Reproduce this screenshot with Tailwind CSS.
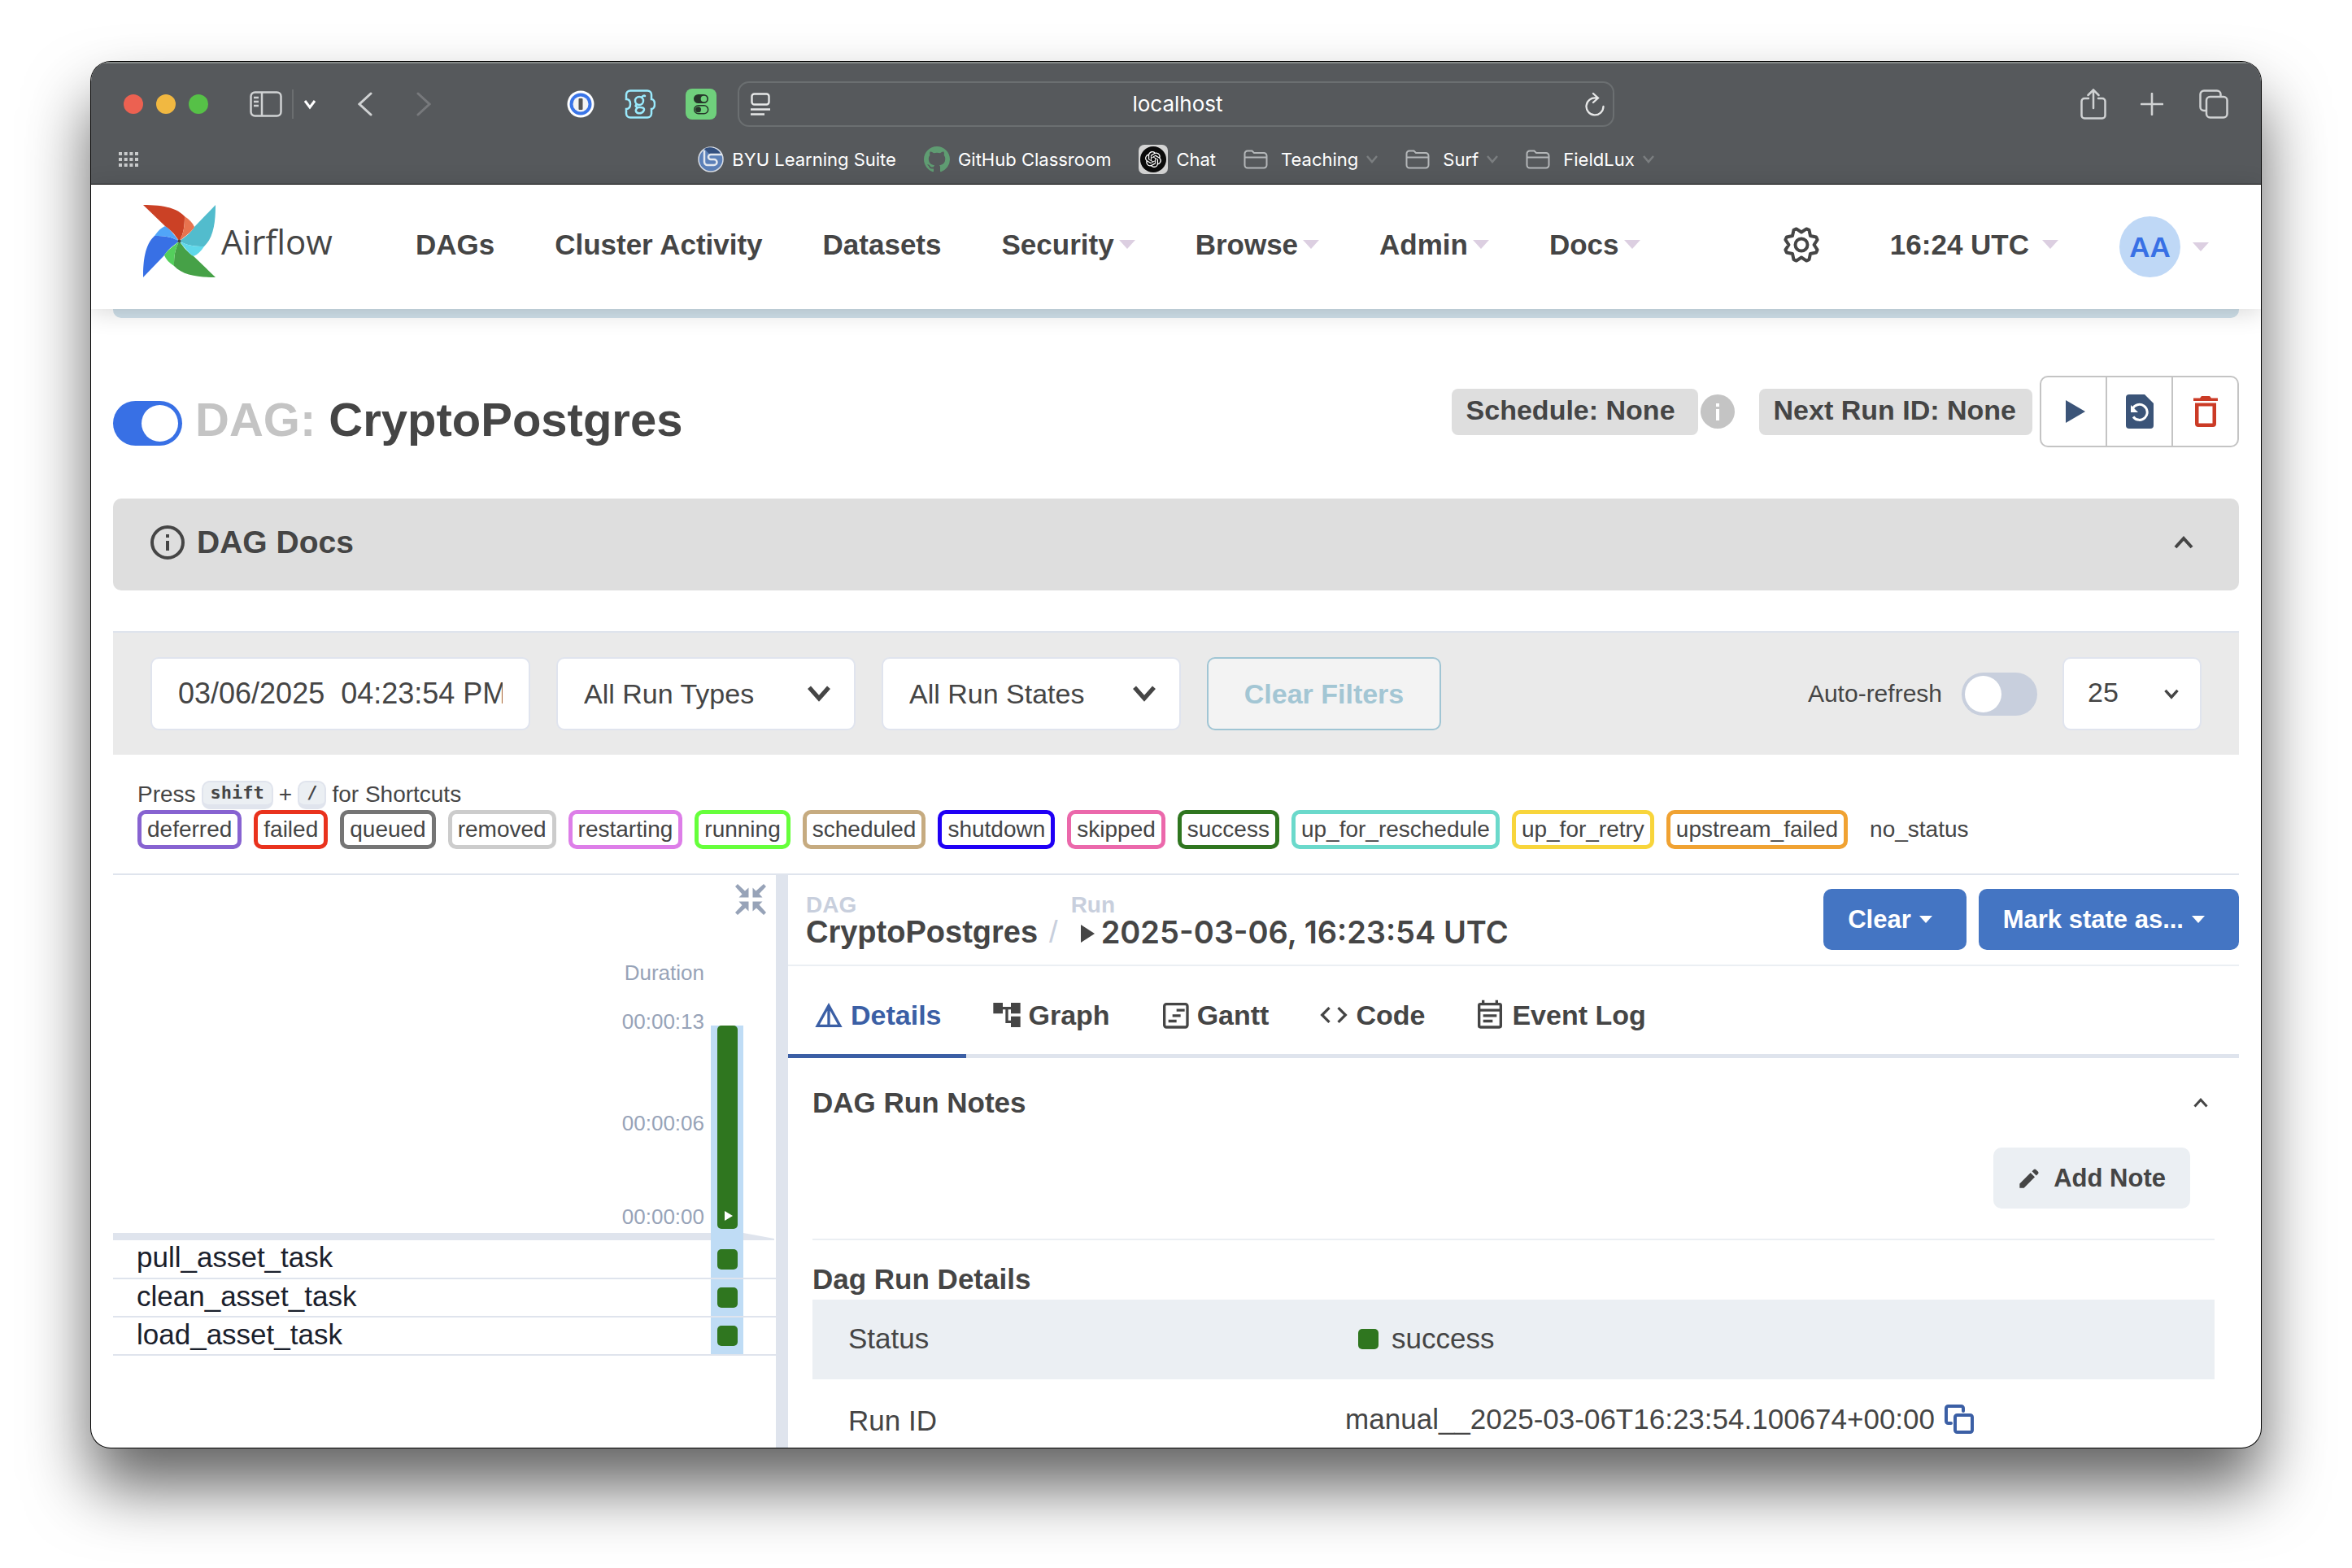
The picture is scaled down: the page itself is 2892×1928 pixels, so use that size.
<!DOCTYPE html>
<html lang="en">
<head>
<meta charset="utf-8">
<meta name="viewport" content="width=device-width, initial-scale=1">
<title>CryptoPostgres - Airflow</title>
<script src="https://cdn.jsdelivr.net/npm/@tailwindcss/browser@4"></script>
</head>
<body class="h-screen overflow-hidden bg-white px-[112px] pt-[76px] pb-[148px] font-['Liberation_Sans',Arial,sans-serif] text-[34px] leading-10 text-[#454545]">

<svg class="hidden" aria-hidden="true">
  <symbol id="caret" viewBox="0 0 20 11"><path d="M0 0h20L10 11z" fill="currentColor"/></symbol>
  <symbol id="chev" viewBox="0 0 24 24"><path d="M3 7l9 10 9-10" fill="none" stroke="currentColor" stroke-width="4"/></symbol>
  <symbol id="chev-up" viewBox="0 0 24 24"><path d="M2 18L12 7l10 11" fill="none" stroke="currentColor" stroke-width="4"/></symbol>
  <symbol id="folder" viewBox="0 0 30 24"><path d="M1.500 5v14a3.500 3.500 0 0 0 3.500 3.500h20a3.500 3.500 0 0 0 3.500-3.500V7.500a3.500 3.500 0 0 0-3.500-3.500H13l-2.500-2.500H5A3.500 3.500 0 0 0 1.500 5zM1.500 9.500h27" fill="none" stroke="#b4b7b9" stroke-width="2"/></symbol>
  <symbol id="book-chev" viewBox="0 0 14 10"><path d="M1 1l6 7 6-7" fill="none" stroke="#7b7e80" stroke-width="2.500"/></symbol>
</svg>

<div class="flex h-full flex-col overflow-hidden rounded-[24px] bg-white shadow-[0_0_0_1px_#000,0_48px_80px_rgba(0,0,0,0.62)]">

  <!-- Browser toolbar -->
  <header class="shrink-0 border-b border-black bg-[#56595c] font-[Inter,sans-serif] text-white shadow-[inset_0_2px_0_#868a89]">
    <div class="grid h-[104px] grid-cols-[1fr_minmax(0,1078px)_1fr] items-center px-10">
      <div class="flex items-center pr-[26px]">
        <div class="flex gap-4">
          <span class="size-6 rounded-full bg-[#ec6151]"></span>
          <span class="size-6 rounded-full bg-[#f1b841]"></span>
          <span class="size-6 rounded-full bg-[#56c147]"></span>
        </div>
        <button class="ml-[51px]" aria-label="Sidebar">
          <svg class="h-8 w-10" viewBox="0 0 40 32" fill="none" stroke="#d0d2d3" stroke-width="2.500"><rect x="1.500" y="1.500" width="37" height="29" rx="5"/><path d="M15 2v28M5 8h6M5 13h6M5 18h6"/></svg>
        </button>
        <span class="ml-3 h-9 w-0.5 bg-[#6b6e70]"></span>
        <button class="ml-3" aria-label="Tab groups"><svg class="h-4 w-4" viewBox="0 0 16 16"><path d="M2 4l6 8 6-8" fill="none" stroke="#fff" stroke-width="3"/></svg></button>
        <button class="ml-[51px]" aria-label="Back"><svg class="h-[30px] w-[18px]" viewBox="0 0 18 30"><path d="M16 2L2 15l14 13" fill="none" stroke="#d0d2d3" stroke-width="3" stroke-linecap="round"/></svg></button>
        <button class="ml-[54px]" aria-label="Forward"><svg class="h-[30px] w-[18px]" viewBox="0 0 18 30"><path d="M2 2l14 13L2 28" fill="none" stroke="#77797c" stroke-width="3" stroke-linecap="round"/></svg></button>
        <div class="ml-auto flex items-center gap-[37px]">
          <svg class="size-[34px]" viewBox="0 0 34 34"><circle cx="17" cy="17" r="16.500" fill="#fff"/><circle cx="17" cy="17" r="13.500" fill="#3a75e8"/><circle cx="17" cy="17" r="9.500" fill="#f4f4f4"/><rect x="14.500" y="10" width="5" height="14" rx="1" fill="#555"/></svg>
          <svg class="h-9 w-[38px]" viewBox="0 0 38 36" fill="none" stroke="#9aeafd" stroke-width="2.500"><path d="M7 1.500h21a5 5 0 0 1 5 5V12c2 0 4 2 4 6s-2 6-4 6v5.500a5 5 0 0 1-5 5H7a5 5 0 0 1-5-5V24c4 0 5-3 5-6s-1-6-5-6V6.500a5 5 0 0 1 5-5z"/><circle cx="18" cy="14" r="5"/><path d="M21 10c1-2 3-3 4-2M15 18c-3 3-1 4 4 4s6 2 4 5-8 3-9 0 1-4 3-5" stroke-linecap="round"/></svg>
          <svg class="size-[38px]" viewBox="0 0 38 38"><rect width="38" height="38" rx="8" fill="#6fd07c"/><rect x="10" y="7" width="18" height="11" rx="5.500" fill="#26352a"/><circle cx="22.500" cy="12.500" r="3.800" fill="#6fd07c"/><rect x="10.700" y="20.700" width="17" height="10" rx="5" fill="none" stroke="#26352a" stroke-width="1.500"/><circle cx="15.500" cy="25.700" r="3.500" fill="#26352a"/></svg>
        </div>
      </div>
      <div class="flex h-14 items-center rounded-[14px] border-2 border-[#6b6f71] pr-2.5 pl-3.5">
        <svg class="h-[28px] w-6" viewBox="0 0 24 28" fill="none" stroke="#e6e7e7" stroke-width="2.400"><rect x="1.500" y="1.500" width="21" height="13" rx="3"/><path d="M0 20.500h24M0 26.500h17"/></svg>
        <input aria-label="Address" class="min-w-0 flex-1 bg-transparent text-center text-[26px] outline-none" value="localhost">
        <svg class="h-[30px] w-6" viewBox="0 0 24 30" fill="none" stroke="#e6e7e7" stroke-width="2.300" stroke-linecap="round"><path d="M13.500 7.500A10.500 10.500 0 1 0 22.500 18M10 2l6 5.500-6 5.500"/></svg>
      </div>
      <div class="flex items-center justify-end">
        <button aria-label="Share"><svg class="h-[38px] w-8" viewBox="0 0 32 38" fill="none" stroke="#d0d2d3" stroke-width="2.500" stroke-linecap="round"><path d="M10 12H5a3.500 3.500 0 0 0-3.500 3.500V33A3.500 3.500 0 0 0 5 36.500h22a3.500 3.500 0 0 0 3.500-3.500V15.500A3.500 3.500 0 0 0 27 12h-5M16 24V2M9.500 8L16 1.500 22.500 8"/></svg></button>
        <button class="ml-[42px]" aria-label="New tab"><svg class="size-7" viewBox="0 0 28 28" stroke="#d0d2d3" stroke-width="2.600" stroke-linecap="round"><path d="M14 1v26M1 14h26"/></svg></button>
        <button class="ml-11" aria-label="Tab overview"><svg class="size-9" viewBox="0 0 36 36" fill="none" stroke="#d0d2d3" stroke-width="2.500"><path d="M9 26H6a4.500 4.500 0 0 1-4.500-4.500V6A4.500 4.500 0 0 1 6 1.500h16A4.500 4.500 0 0 1 26.500 6v3"/><rect x="9" y="9" width="25.500" height="25.500" rx="4.500"/></svg></button>
      </div>
    </div>
    <nav class="grid grid-cols-[1fr_auto_1fr] items-center px-[34px] pb-3.5 text-[22px] leading-8" aria-label="Bookmarks">
      <svg class="h-[18px] w-6" viewBox="0 0 24 18" fill="#c9cbcc"><path d="M0 0h4v4H0zM6.700 0h4v4h-4zM13.400 0h4v4h-4zM20 0h4v4h-4zM0 7h4v4H0zM6.700 7h4v4h-4zM13.400 7h4v4h-4zM20 7h4v4h-4zM0 14h4v4H0zM6.700 14h4v4h-4zM13.400 14h4v4h-4zM20 14h4v4h-4z"/></svg>
      <div class="flex h-8 items-center gap-[34px]">
        <a href="#" class="flex items-center gap-2.5"><svg class="size-8" viewBox="0 0 32 32"><circle cx="16" cy="16" r="15" fill="#5b80b8" stroke="#d9dee6" stroke-width="1.500"/><path d="M8 3a15 15 0 0 1 21 8H16z" fill="#33507f"/><path d="M8 5v14a4 4 0 0 0 4 4h8a3.500 3.500 0 0 0 0-7h-4a3 3 0 0 1 0-6h14" fill="none" stroke="#e3e8ef" stroke-width="2.500"/></svg>BYU Learning Suite</a>
        <a href="#" class="flex items-center gap-2.5"><svg class="size-8" viewBox="0 0 16 16" fill="#5f9c72"><path d="M8 0C3.580 0 0 3.580 0 8c0 3.540 2.290 6.530 5.470 7.590.4.070.55-.17.55-.38 0-.19-.01-.82-.01-1.490-2.010.37-2.530-.49-2.690-.94-.09-.23-.48-.94-.82-1.130-.28-.15-.68-.52-.01-.53.63-.01 1.080.58 1.230.82.72 1.210 1.870.87 2.330.66.07-.52.28-.87.51-1.070-1.780-.2-3.640-.89-3.640-3.950 0-.87.31-1.590.82-2.150-.08-.2-.36-1.020.08-2.120 0 0 .67-.21 2.200.82.64-.18 1.320-.27 2-.27s1.360.09 2 .27c1.530-1.040 2.200-.82 2.200-.82.44 1.100.16 1.920.08 2.120.51.56.82 1.270.82 2.150 0 3.070-1.870 3.750-3.650 3.950.29.25.54.73.54 1.480 0 1.070-.01 1.930-.01 2.200 0 .21.15.46.55.38A8.010 8.010 0 0 0 16 8c0-4.420-3.580-8-8-8z"/></svg>GitHub Classroom</a>
        <a href="#" class="flex items-center gap-2.5"><svg class="size-9" viewBox="0 0 36 36"><rect width="36" height="36" rx="7" fill="#d4d4d4"/><circle cx="18" cy="18" r="16" fill="#0b0b0b"/><g transform="translate(8 8) scale(.83)" fill="#fff"><path d="M22.282 9.821a5.985 5.985 0 0 0-.516-4.911 6.046 6.046 0 0 0-6.510-2.900A6.065 6.065 0 0 0 4.981 4.182a5.985 5.985 0 0 0-3.998 2.900 6.046 6.046 0 0 0 .743 7.097 5.980 5.980 0 0 0 .511 4.911 6.051 6.051 0 0 0 6.515 2.900A5.985 5.985 0 0 0 13.260 24a6.056 6.056 0 0 0 5.772-4.206 5.989 5.989 0 0 0 3.998-2.900 6.056 6.056 0 0 0-.748-7.073zm-9.022 12.608a4.476 4.476 0 0 1-2.876-1.041l.142-.080 4.778-2.758a.795.795 0 0 0 .393-.681v-6.737l2.020 1.169a.071.071 0 0 1 .038.052v5.583a4.504 4.504 0 0 1-4.495 4.494zm-9.661-4.125a4.471 4.471 0 0 1-.535-3.014l.142.085 4.783 2.758a.771.771 0 0 0 .781 0l5.843-3.369v2.332a.080.080 0 0 1-.033.062L9.740 19.950a4.499 4.499 0 0 1-6.141-1.646zM2.341 7.896a4.485 4.485 0 0 1 2.366-1.973V11.600a.766.766 0 0 0 .388.677l5.814 3.354-2.020 1.169a.076.076 0 0 1-.071 0l-4.830-2.787A4.504 4.504 0 0 1 2.341 7.872zm16.596 3.856L13.104 8.364 15.119 7.200a.076.076 0 0 1 .071 0l4.830 2.791a4.494 4.494 0 0 1-.677 8.104v-5.677a.790.790 0 0 0-.407-.667zm2.011-3.023l-.142-.085-4.774-2.782a.776.776 0 0 0-.785 0L9.409 9.230V6.897a.066.066 0 0 1 .028-.062l4.830-2.787a4.499 4.499 0 0 1 6.680 4.660zM8.307 12.863l-2.020-1.164a.080.080 0 0 1-.038-.057V6.074a4.499 4.499 0 0 1 7.376-3.454l-.142.081L8.704 5.459a.795.795 0 0 0-.393.681zm1.098-2.365l2.602-1.500 2.607 1.500v2.999l-2.597 1.500-2.607-1.500Z"/></g></svg>Chat</a>
        <a href="#" class="flex items-center gap-4"><svg class="h-6 w-[30px]"><use href="#folder"/></svg><span class="flex items-center gap-2.5">Teaching<svg class="h-2.5 w-3.5"><use href="#book-chev"/></svg></span></a>
        <a href="#" class="flex items-center gap-4"><svg class="h-6 w-[30px]"><use href="#folder"/></svg><span class="flex items-center gap-2.5">Surf<svg class="h-2.5 w-3.5"><use href="#book-chev"/></svg></span></a>
        <a href="#" class="flex items-center gap-4"><svg class="h-6 w-[30px]"><use href="#folder"/></svg><span class="flex items-center gap-2.5">FieldLux<svg class="h-2.5 w-3.5"><use href="#book-chev"/></svg></span></a>
      </div>
    </nav>
  </header>

  <!-- Airflow navigation -->
  <nav class="relative z-10 flex h-[153px] shrink-0 items-center bg-white px-16 text-[35px] font-bold shadow-[0_4px_28px_rgba(0,0,0,0.16)]" aria-label="Main">
    <a href="#" class="flex items-center gap-[7px] pb-3.5 font-['Open_Sans',sans-serif] text-[42px] font-normal">
      <svg class="size-[89px]" viewBox="0 0 89 89">
        <defs>
          <path id="blade" d="M0 0C20 0 40 2 51 14C51 26 50 35 44.500 44.500C40 38 34 30 27 26z"/>
          <path id="fold" d="M51 14C57 18 61 22 63 27C60 33 52 38 44.500 44.500C50 35 51 26 51 14z"/>
        </defs>
        <g transform="rotate(-90 44.500 44.500)"><use href="#blade" fill="#3870e5"/><use href="#fold" fill="#51a5f8"/></g>
        <g transform="rotate(180 44.500 44.500)"><use href="#blade" fill="#46a147"/><use href="#fold" fill="#54cf5c"/></g>
        <g transform="rotate(90 44.500 44.500)"><use href="#blade" fill="#52bccd"/><use href="#fold" fill="#5fd8ea"/></g>
        <use href="#blade" fill="#cb4125"/><use href="#fold" fill="#e8734f"/>
        <circle cx="44.500" cy="44.500" r="2" fill="#454545"/>
      </svg>
      <span>Airflow</span>
    </a>
    <div class="ml-[102px] flex items-center gap-[74px] pb-1.5">
      <a href="#">DAGs</a>
      <a href="#">Cluster Activity</a>
      <a href="#">Datasets</a>
      <a href="#" class="flex items-center gap-1.5">Security<svg class="h-[11px] w-5 text-[#dccfe1]"><use href="#caret"/></svg></a>
      <a href="#" class="flex items-center gap-1.5">Browse<svg class="h-[11px] w-5 text-[#dccfe1]"><use href="#caret"/></svg></a>
      <a href="#" class="flex items-center gap-1.5">Admin<svg class="h-[11px] w-5 text-[#dccfe1]"><use href="#caret"/></svg></a>
      <a href="#" class="flex items-center gap-1.5">Docs<svg class="h-[11px] w-5 text-[#dccfe1]"><use href="#caret"/></svg></a>
    </div>
    <div class="ml-auto flex items-center">
      <button class="pb-1.5" aria-label="Settings"><svg class="size-[46px]" viewBox="-23 -23 46 46" fill="none" stroke="#454545" stroke-width="4" stroke-linejoin="round"><path d="M0-15.500 6.200-19.600 9.500-18.200 11-11 18.200-9.500 19.600-6.200 15.500 0 19.600 6.200 18.200 9.500 11 11 9.500 18.200 6.200 19.600 0 15.500-6.200 19.600-9.500 18.200-11 11-18.200 9.500-19.600 6.200-15.500 0-19.600-6.200-18.200-9.500-11-11-9.500-18.200-6.200-19.600z"/><circle r="7.500"/></svg></button>
      <button class="ml-[86px] flex items-center gap-4 pb-1.5">16:24 UTC<svg class="h-[11px] w-5 text-[#dccfe1]"><use href="#caret"/></svg></button>
      <button class="ml-[75px] flex items-center gap-[15px]"><span class="flex size-[75px] items-center justify-center rounded-full bg-[#bfd8f6] text-[#3870e5]">AA</span><svg class="h-[11px] w-5 text-[#dccfe1]"><use href="#caret"/></svg></button>
    </div>
  </nav>

  <main class="flex min-h-0 flex-1 flex-col px-[27px]">
    <div class="h-[11px] shrink-0 rounded-b-[10px] bg-[#cfe0ea]"></div>

    <!-- DAG title -->
    <section class="mt-[71px] flex h-[88px] shrink-0 justify-between">
      <div class="flex items-end gap-4 pb-0.5">
        <input type="checkbox" role="switch" checked aria-label="Pause or unpause DAG" class="relative h-[55px] w-[85px] appearance-none rounded-full bg-[#3870e5] before:absolute before:top-[5px] before:right-[5px] before:size-[45px] before:rounded-full before:bg-white before:content-['']">
        <h1 class="text-[58px] leading-[64px] font-bold"><span class="text-[#c4c4c4]">DAG:</span> CryptoPostgres</h1>
      </div>
      <div class="flex items-center font-bold">
        <span class="rounded-lg bg-[#dedede] pt-1.5 pr-7 pb-[11px] pl-[18px]">Schedule: None</span>
        <svg class="ml-[3px] size-[42px]" viewBox="0 0 42 42"><circle cx="21" cy="21" r="21" fill="#c4c4c4"/><path d="M19 11h4v4h-4zM19 18h4v14h-4z" fill="#fff"/></svg>
        <span class="ml-[30px] rounded-lg bg-[#dedede] pt-1.5 pr-5 pb-[11px] pl-[18px]">Next Run ID: None</span>
        <div class="ml-[9px] flex h-[88px] w-[245px] divide-x-2 divide-[#c4c4c4] rounded-[10px] border-2 border-[#c4c4c4]">
          <button class="flex flex-1 items-center justify-center" aria-label="Trigger DAG"><svg class="ml-1 h-7 w-6" viewBox="0 0 24 28"><path d="M0 0l24 14L0 28z" fill="#3b5478"/></svg></button>
          <button class="flex flex-1 items-center justify-center" aria-label="Reparse DAG"><svg class="h-[42px] w-[34px]" viewBox="0 0 34 42"><path d="M4 0h19l11 11v27a4 4 0 0 1-4 4H4a4 4 0 0 1-4-4V4a4 4 0 0 1 4-4z" fill="#3b5478"/><path d="M8 18a9.500 9.500 0 1 1 1 9.500" fill="none" stroke="#fff" stroke-width="3"/><path d="M6 13v9h9z" fill="#fff"/></svg></button>
          <button class="flex flex-1 items-center justify-center" aria-label="Delete DAG"><svg class="h-[38px] w-[30px]" viewBox="0 0 30 38" fill="#cb3b26"><path d="M0 2.500h8L10 0h10l2 2.500h8V6H0zM2 8.500h26V34a4 4 0 0 1-4 4H6a4 4 0 0 1-4-4zm4.500 4V33.500h17V12.500z" fill-rule="evenodd"/></svg></button>
        </div>
      </div>
    </section>

    <button class="mt-[63px] flex h-[113px] shrink-0 items-center rounded-[10px] bg-[#dedede] pr-14 pb-1.5 pl-[46px] text-[39px] font-bold">
      <svg class="size-[42px]" viewBox="0 0 42 42" fill="none" stroke="#454545"><circle cx="21" cy="21" r="19" stroke-width="4"/><path d="M21 19v12M21 11v4" stroke-width="4"/></svg>
      <span class="ml-[15px]">DAG Docs</span>
      <svg class="ml-auto size-6"><use href="#chev-up"/></svg>
    </button>

    <!-- Filters -->
    <form class="mt-[50px] flex h-[152px] shrink-0 items-center gap-8 border-t-2 border-[#dfe4ed] bg-[#eaeaea] px-[46px]">
      <input type="text" aria-label="Base date" value="03/06/2025&nbsp; 04:23:54 PM" class="h-[90px] w-[467px] rounded-[10px] border-2 border-[#e0e4ee] bg-white px-8 text-4xl">
      <div class="relative">
        <select aria-label="Run types" class="h-[90px] w-[368px] appearance-none rounded-[10px] border-2 border-[#e0e4ee] bg-white px-8"><option>All Run Types</option></select>
        <svg class="pointer-events-none absolute top-[28px] right-[29px] size-8"><use href="#chev"/></svg>
      </div>
      <div class="relative">
        <select aria-label="Run states" class="h-[90px] w-[368px] appearance-none rounded-[10px] border-2 border-[#e0e4ee] bg-white px-8"><option>All Run States</option></select>
        <svg class="pointer-events-none absolute top-[28px] right-[29px] size-8"><use href="#chev"/></svg>
      </div>
      <button type="button" class="h-[90px] w-[288px] rounded-[10px] border-2 border-[#a0c5d4] bg-[#f3f3f3] font-bold text-[#a3c6d4]">Clear Filters</button>
      <div class="ml-auto flex items-center">
        <label for="auto" class="text-[30px]">Auto-refresh</label>
        <input id="auto" type="checkbox" role="switch" class="relative ml-6 h-[53px] w-[93px] appearance-none rounded-full bg-[#c8cfdd] before:absolute before:top-1 before:left-1 before:size-[45px] before:rounded-full before:bg-white before:content-['']">
        <div class="relative ml-[31px]">
          <select aria-label="Number of runs" class="h-[90px] w-[171px] appearance-none rounded-[10px] border-2 border-[#e0e4ee] bg-white px-[29px] pb-1"><option>25</option></select>
          <svg class="pointer-events-none absolute top-[35px] right-[27px] size-5"><use href="#chev"/></svg>
        </div>
      </div>
    </form>

    <!-- Shortcut hint and state legend -->
    <section class="shrink-0 border-b-2 border-[#dfe4ed] px-[30px] pt-8 pb-[30px] text-[28px]">
      <p class="flex h-9 items-center gap-[7px] pb-0.5 leading-8">Press
        <kbd class="h-[35px] rounded-[10px] border-2 border-b-[6px] border-[#e0e4ed] bg-[#ebeff3] px-[9px] font-['DejaVu_Sans_Mono',monospace] text-[22px] leading-[26px] font-bold">shift</kbd>
        <span>+</span>
        <kbd class="h-[35px] rounded-[10px] border-2 border-b-[6px] border-[#e0e4ed] bg-[#ebeff3] px-[9px] font-['DejaVu_Sans_Mono',monospace] text-[22px] leading-[26px] font-bold">/</kbd>
        for Shortcuts</p>
      <ul class="flex gap-[15px] leading-[38px]">
        <li class="rounded-[10px] border-5 border-[#8763d1] px-[7px]">deferred</li>
        <li class="rounded-[10px] border-5 border-[#e9321d] px-[7px]">failed</li>
        <li class="rounded-[10px] border-5 border-[#757575] px-[7px]">queued</li>
        <li class="rounded-[10px] border-5 border-[#cccccc] px-[7px]">removed</li>
        <li class="rounded-[10px] border-5 border-[#dd7ee8] px-[7px]">restarting</li>
        <li class="rounded-[10px] border-5 border-[#66ff3b] px-[7px]">running</li>
        <li class="rounded-[10px] border-5 border-[#c6ab80] px-[7px]">scheduled</li>
        <li class="rounded-[10px] border-5 border-[#1f00f5] px-[7px]">shutdown</li>
        <li class="rounded-[10px] border-5 border-[#eb68ab] px-[7px]">skipped</li>
        <li class="rounded-[10px] border-5 border-[#2f761f] px-[7px]">success</li>
        <li class="rounded-[10px] border-5 border-[#6bd9cb] px-[7px]">up_for_reschedule</li>
        <li class="rounded-[10px] border-5 border-[#f8d53b] px-[7px]">up_for_retry</li>
        <li class="rounded-[10px] border-5 border-[#f0a232] px-[7px]">upstream_failed</li>
        <li class="rounded-[10px] border-5 border-transparent px-[7px]">no_status</li>
      </ul>
    </section>

    <div class="flex min-h-0 flex-1">
      <!-- Run grid -->
      <section class="flex-[815_1_0px]">
        <div class="flex justify-end pt-[11px] pr-3">
          <button aria-label="Collapse"><svg class="block size-[38px]" viewBox="0 0 38 38" fill="#97a3b8"><path id="arr" d="M16.500 16.500H4.500l4-4L0 3 3 0l9 8.500 4.500-4z"/><use href="#arr" transform="rotate(90 19 19)"/><use href="#arr" transform="rotate(180 19 19)"/><use href="#arr" transform="rotate(270 19 19)"/></svg></button>
        </div>
        <div class="flex h-[391px] justify-end pr-10">
          <div class="flex flex-col pt-14 pr-2 text-right text-[26px] leading-[30px] text-[#97a3b8]">
            <span>Duration</span><span class="mt-[30px]">00:00:13</span><span class="mt-[95px]">00:00:06</span><span class="mt-[85px]">00:00:00</span>
          </div>
          <div class="mt-[136px] flex w-10 justify-center bg-[#bfdcf5]">
            <div class="flex h-[250px] w-[25px] items-end justify-center rounded-[5px] bg-[#2f761f] pb-2.5"><svg class="ml-1 h-3 w-2.5" viewBox="0 0 10 12"><path d="M0 0l10 6-10 6z" fill="#fff"/></svg></div>
          </div>
        </div>
        <div class="flex h-[9px]"><span class="flex-1 bg-[#dfe4ed]"></span><span class="w-10 bg-[#bfdcf5]"></span><svg class="h-[9px] w-10" viewBox="0 0 40 9"><path d="M0 0l38 7v2H0z" fill="#dfe4ed"/></svg></div>
        <table class="w-full text-[35px] text-[#1a202c]">
          <tr class="h-[47px] border-b-2 border-[#dfe4ed]"><td class="pb-1 pl-[29px]">pull_asset_task</td><td class="w-10 bg-[#bfdcf5]"><div class="mx-auto size-[25px] rounded-[5px] bg-[#2f761f]"></div></td><td class="w-10"></td></tr>
          <tr class="h-[47px] border-b-2 border-[#dfe4ed]"><td class="pb-1 pl-[29px]">clean_asset_task</td><td class="w-10 bg-[#bfdcf5]"><div class="mx-auto size-[25px] rounded-[5px] bg-[#2f761f]"></div></td><td class="w-10"></td></tr>
          <tr class="h-[47px] border-b-2 border-[#dfe4ed]"><td class="pb-1 pl-[29px]">load_asset_task</td><td class="w-10 bg-[#bfdcf5]"><div class="mx-auto size-[25px] rounded-[5px] bg-[#2f761f]"></div></td><td class="w-10"></td></tr>
        </table>
      </section>
      <div class="w-[15px] bg-[#dfe4ed]"></div>

      <!-- Run details -->
      <section class="flex-[1784_1_0px]">
        <div class="flex h-28 justify-between border-b-2 border-[#ebeff3] pt-[17px] pl-[22px] font-bold">
          <div class="flex pt-[5px]">
            <div class="flex flex-col"><span class="text-[28px] leading-[30px] text-[#c8cfdd]">DAG</span><a href="#" class="text-[38px] leading-9">CryptoPostgres</a></div>
            <span class="mt-[30px] px-3.5 text-[38px] leading-9 font-normal text-[#c8cfdd]">/</span>
            <div class="ml-0.5 flex flex-col"><span class="text-[28px] leading-[30px] text-[#c8cfdd]">Run</span><a href="#" class="flex items-center gap-2 pl-3 font-[Inter,sans-serif] text-[38px] leading-9 font-semibold"><svg class="mt-1 h-[22px] w-[17px]" viewBox="0 0 17 22"><path d="M0 0l17 11L0 22z" fill="#454545"/></svg>2025-03-06, 16:23:54 UTC</a></div>
          </div>
          <div class="flex gap-[15px] text-[31px] text-white">
            <button class="flex h-[75px] items-center gap-2.5 rounded-[10px] bg-[#4475c3] pr-[42px] pl-[30px]">Clear<svg class="h-[9px] w-4"><use href="#caret"/></svg></button>
            <button class="flex h-[75px] items-center gap-2.5 rounded-[10px] bg-[#4475c3] pr-[42px] pl-[30px]">Mark state as...<svg class="h-[9px] w-4"><use href="#caret"/></svg></button>
          </div>
        </div>
        <div class="flex h-[113px] border-b-[5px] border-[#dfe4ed] font-bold" role="tablist">
          <button role="tab" class="-mb-[5px] flex items-center gap-[7px] border-b-[5px] border-[#3b5fa5] px-[30px] pt-3 text-[#3b5fa5]"><svg class="size-10" viewBox="0 0 24 24" fill="currentColor"><path d="M12 3L2 21h20zm1 5.920L18.600 19H13zm-2 0V19H5.400z" fill-rule="evenodd"/></svg>Details</button>
          <button role="tab" class="flex items-center gap-[7px] px-[30px] pt-3"><svg class="size-10" viewBox="0 0 24 24" fill="currentColor"><path d="M22 11V3h-7v3H9V3H2v8h7V8h2v10h4v3h7v-8h-7v3h-2V8h2v3z"/></svg>Graph</button>
          <button role="tab" class="flex items-center gap-[7px] px-[30px] pt-3"><svg class="size-10" viewBox="0 0 24 24" fill="none" stroke="currentColor" stroke-width="2"><rect x="4" y="4" width="17" height="17" rx="1.500"/><path d="M13 8.500h6M10 12.500h6M7 16.500h6"/></svg>Gantt</button>
          <button role="tab" class="flex items-center gap-[7px] px-[30px] pt-3"><svg class="size-10" viewBox="0 0 24 24" fill="currentColor"><path d="M9.400 16.600L4.800 12l4.600-4.600L8 6l-6 6 6 6zm5.200 0l4.600-4.600-4.600-4.600L16 6l6 6-6 6z"/></svg>Code</button>
          <button role="tab" class="flex items-center gap-[7px] px-[30px] pt-3"><svg class="size-10" viewBox="0 0 24 24" fill="currentColor"><path d="M19 3h-1V1h-2v2H8V1H6v2H5a2 2 0 0 0-2 2v15a2 2 0 0 0 2 2h14a2 2 0 0 0 2-2V5a2 2 0 0 0-2-2zm0 17H5V9.500h14zm0-12.500H5V5h14zM7 11.500h10v2H7zm0 4h7v2H7z" fill-rule="evenodd"/></svg>Event Log</button>
        </div>
        <div class="px-[30px] pt-[35px]">
          <div class="border-b-2 border-[#ebeff3] pb-[37px]">
            <button class="flex w-full items-center justify-between pr-2 text-[35px] font-bold">DAG Run Notes<svg class="size-[18px]"><use href="#chev-up"/></svg></button>
            <div class="mt-[35px] flex justify-end pr-[30px]">
              <button class="flex h-[75px] items-center gap-4 rounded-[10px] bg-[#ebeff3] px-[30px] text-[31px] font-bold"><svg class="size-7" viewBox="0 0 24 24" fill="currentColor"><path d="M2 17.500V22h4.500L18 10.500 13.500 6zM15 4.500l4.500 4.500 2-2a1.500 1.500 0 0 0 0-2L19 2.500a1.500 1.500 0 0 0-2 0z"/></svg>Add Note</button>
            </div>
          </div>
          <h2 class="pt-7 pb-[5px] text-[35px] font-bold">Dag Run Details</h2>
          <table class="w-full table-fixed text-[35px]">
            <tr class="h-[98px] bg-[#ebeff3]"><td class="w-[38%] pb-0.5 pl-11">Status</td><td class="pb-0.5"><span class="flex items-center gap-4 pl-4"><span class="size-[25px] rounded-[5px] bg-[#2f761f]"></span>success</span></td></tr>
            <tr class="h-[102px]"><td class="w-[38%] pl-11">Run ID</td><td class="pb-1"><span class="flex items-center gap-3">manual__2025-03-06T16:23:54.100674+00:00<button aria-label="Copy"><svg class="size-9" viewBox="0 0 36 36" fill="none" stroke="#3b5fa5" stroke-width="4"><rect x="13" y="13" width="21" height="21" rx="2.500"/><path d="M8 23H4.500A2.500 2.500 0 0 1 2 20.500v-16A2.500 2.500 0 0 1 4.500 2h16A2.500 2.500 0 0 1 23 4.500V8" stroke-linecap="round"/></svg></button></span></td></tr>
          </table>
        </div>
      </section>
    </div>
  </main>
</div>
</body>
</html>
